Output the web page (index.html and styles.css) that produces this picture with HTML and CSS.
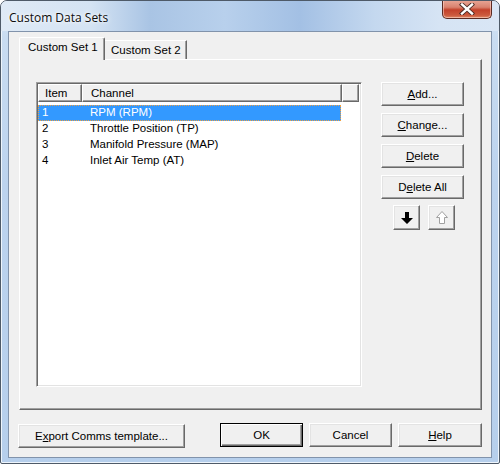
FILE: index.html
```html
<!DOCTYPE html>
<html lang="en">
<head>
  <meta charset="UTF-8">
  <meta name="viewport" content="width=device-width, initial-scale=1.0">
  <title>Custom Data Sets</title>
  <link rel="stylesheet" href="styles.css">
</head>
<body>

  <div class="window">
    <div class="titlebar">
      <span class="title">Custom Data Sets</span>
      <div class="close-btn">
        <svg width="16" height="12" viewBox="0 0 16 12">
          <path d="M3 1.5 L13 10.5 M13 1.5 L3 10.5" stroke="#4a2a24" stroke-width="4.2" stroke-linecap="square"/>
          <path d="M3 1.5 L13 10.5 M13 1.5 L3 10.5" stroke="#ffffff" stroke-width="2.4" stroke-linecap="square"/>
        </svg>
      </div>
    </div>

    <div class="client">
      <div class="tabs">
        <div class="tab active">Custom Set 1</div>
        <div class="tab">Custom Set 2</div>
      </div>

      <div class="tab-page">
        <div class="listview">
          <div class="lv-header">
            <div class="lv-col col-item">Item</div>
            <div class="lv-col col-channel">Channel</div>
            <div class="lv-col col-rest"></div>
          </div>
          <div class="lv-row selected">
            <div class="cell-item">1</div>
            <div class="cell-channel">RPM (RPM)</div>
          </div>
          <div class="lv-row">
            <div class="cell-item">2</div>
            <div class="cell-channel">Throttle Position (TP)</div>
          </div>
          <div class="lv-row">
            <div class="cell-item">3</div>
            <div class="cell-channel">Manifold Pressure (MAP)</div>
          </div>
          <div class="lv-row">
            <div class="cell-item">4</div>
            <div class="cell-channel">Inlet Air Temp (AT)</div>
          </div>
        </div>

        <div class="side-buttons">
          <button class="btn"><u>A</u>dd...</button>
          <button class="btn"><u>C</u>hange...</button>
          <button class="btn"><u>D</u>elete</button>
          <button class="btn">D<u>e</u>lete All</button>
          <div class="arrow-row">
            <button class="btn btn-arrow">
              <svg width="14" height="14" viewBox="0 0 14 14">
                <path d="M5 1 H9 V7 H13 L7 13 L1 7 H5 Z" fill="#000"/>
              </svg>
            </button>
            <button class="btn btn-arrow" disabled>
              <svg width="14" height="15" viewBox="0 0 14 15">
                <path d="M7 1.5 L12.5 7.5 H9.5 V13.5 H4.5 V7.5 H1.5 Z" fill="#fff" stroke="#a0a0a0" stroke-width="1"/>
              </svg>
            </button>
          </div>
        </div>
      </div>

      <div class="footer">
        <button class="btn btn-export">E<u>x</u>port Comms template...</button>
        <button class="btn btn-default">OK</button>
        <button class="btn">Cancel</button>
        <button class="btn btn-help"><u>H</u>elp</button>
      </div>
    </div>
  </div>

</body>
</html>
```

FILE: styles.css
```css
body {
  margin: 0;
  font-family: "Liberation Sans", Arial, sans-serif;
  font-size: 11.5px;
  color: #000;
  background-color: #ffffff;
}
.window {
  box-sizing: border-box;
  width: 500px;
  height: 464px;
  border: 1px solid #4e5a68;
  border-radius: 7px 7px 2px 2px;
  background: linear-gradient(180deg, #dbe8f6 0%, #c9dcf1 8%, #bcd3ee 40%, #b6cfec 100%);
  box-shadow: inset 1px 1px 0 #eef5fc, inset -1px -1px 0 #eef5fc;
  overflow: hidden;
}
.titlebar {
  height: 30px;
  display: flex;
  align-items: flex-start;
  justify-content: space-between;
  background: linear-gradient(90deg, #dfeaf6 0%, #d4e3f3 18%, #a9c4e4 30%, #b8d0ec 45%, #a3c0e4 60%, #c4d8ef 75%, #d6e4f4 88%, #d9e6f5 100%);
}
.title {
  font-family: "Open Sans", "Noto Sans", sans-serif;
  font-size: 12px;
  color: #0c0c0c;
  margin: 8px 0 0 8px;
  text-shadow: 0 0 6px #ffffff, 0 0 3px #ffffff;
}
.close-btn {
  width: 50px;
  height: 19px;
  margin-right: 7px;
  margin-top: -1px;
  box-sizing: border-box;
  border: 1px solid #5b2b23;
  border-top: none;
  border-radius: 0 0 5px 5px;
  background: linear-gradient(180deg, #e9a898 0%, #d9826f 40%, #c3412a 55%, #cc5a3e 85%, #e08a66 100%);
  box-shadow: inset 0 0 0 1px rgba(255, 220, 210, 0.55);
  display: flex;
  align-items: center;
  justify-content: center;
}
.client {
  box-sizing: border-box;
  width: 484px;
  height: 427px;
  margin: 0 0 0 7px;
  border: 1px solid #8193ab;
  background-color: #f0f0f0;
  display: flex;
  flex-direction: column;
}
.tabs {
  display: flex;
  align-items: flex-end;
  height: 22px;
  margin: 6px 0 -1px 10px;
}
.tab {
  box-sizing: border-box;
  height: 20px;
  padding: 3px 5px 0 6px;
  border-top: 1px solid #ffffff;
  border-right: 1px solid #696969;
  box-shadow: inset -1px 0 0 #a0a0a0;
  background-color: #f0f0f0;
  white-space: nowrap;
}
.tab.active {
  height: 23px;
  width: 86px;
  padding: 3px 0 0 8px;
  border-left: 1px solid #ffffff;
  border-radius: 2px 2px 0 0;
  position: relative;
  z-index: 1;
}
.tab-page {
  box-sizing: border-box;
  width: 463px;
  height: 351px;
  margin-left: 10px;
  border-top: 1px solid #ffffff;
  border-left: 1px solid #ffffff;
  border-right: 1px solid #696969;
  border-bottom: 1px solid #696969;
  box-shadow: inset -1px -1px 0 #a0a0a0;
  padding: 22px 0 0 16px;
  display: flex;
  align-items: flex-start;
}
.listview {
  box-sizing: border-box;
  width: 326px;
  height: 305px;
  background-color: #ffffff;
  border-top: 1px solid #a0a0a0;
  border-left: 1px solid #a0a0a0;
  border-right: 1px solid #ffffff;
  border-bottom: 1px solid #ffffff;
  box-shadow: inset 1px 1px 0 #696969, inset -1px -1px 0 #e3e3e3;
  padding: 1px 2px 0 1px;
}
.lv-header {
  display: flex;
  height: 18px;
  margin-bottom: 3px;
}
.lv-col {
  box-sizing: border-box;
  height: 18px;
  background-color: #f0f0f0;
  border-top: 1px solid #ffffff;
  border-left: 1px solid #ffffff;
  border-right: 1px solid #696969;
  border-bottom: 1px solid #696969;
  box-shadow: inset -1px -1px 0 #a0a0a0;
  padding: 2px 0 0 6px;
}
.col-item {
  width: 44px;
}
.col-channel {
  width: 260px;
  padding-left: 8px;
}
.col-rest {
  flex: 1;
}
.lv-row {
  display: flex;
  height: 16px;
  line-height: 15px;
  width: 303px;
}
.lv-row.selected {
  background-color: #3399ff;
  color: #ffffff;
  outline: 1px dotted #f0a040;
  outline-offset: -1px;
}
.cell-item {
  width: 44px;
  padding-left: 4px;
  box-sizing: border-box;
}
.cell-channel {
  padding-left: 8px;
}
.side-buttons {
  margin-left: 19px;
  width: 83px;
  display: flex;
  flex-direction: column;
  gap: 7px;
}
.btn {
  box-sizing: border-box;
  width: 83px;
  height: 24px;
  padding: 0;
  font-family: "Liberation Sans", Arial, sans-serif;
  font-size: 11.5px;
  color: #000;
  background-color: #f0f0f0;
  border-top: 1px solid #ffffff;
  border-left: 1px solid #ffffff;
  border-right: 1px solid #696969;
  border-bottom: 1px solid #696969;
  box-shadow: inset -1px -1px 0 #a0a0a0, inset 1px 1px 0 #e3e3e3;
  display: flex;
  align-items: center;
  justify-content: center;
}
.arrow-row {
  display: flex;
  justify-content: center;
  gap: 8px;
  margin-top: -1px;
  padding-left: 3px;
}
.btn-arrow {
  width: 27px;
  height: 25px;
}
.footer {
  display: flex;
  align-items: center;
  margin-top: 12px;
  padding: 0 9px 0 9px;
}
.btn-export {
  width: 167px;
  margin-top: 2px;
  margin-right: auto;
}
.btn-default {
  border: 1px solid #000000;
  box-shadow: inset 1px 1px 0 #ffffff, inset -1px -1px 0 #696969, inset -2px -2px 0 #a0a0a0;
  margin-right: 6px;
}
.btn-help {
  width: 84px;
  margin-left: 6px;
}
```
